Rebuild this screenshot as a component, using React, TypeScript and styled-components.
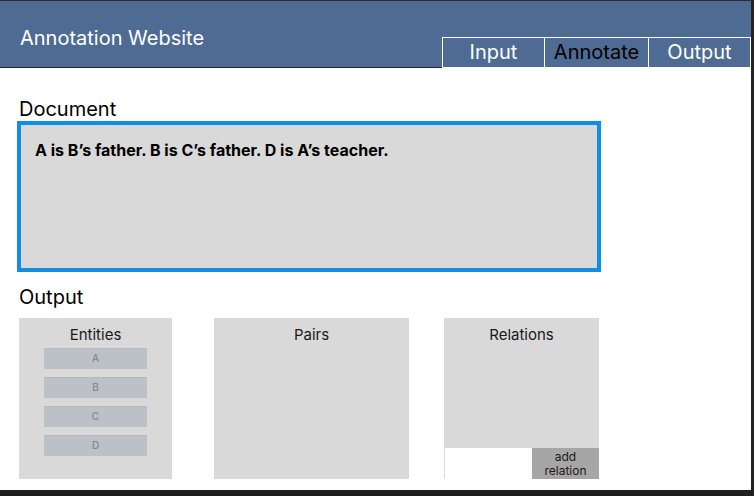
import styled, { createGlobalStyle } from "styled-components"

const tabs = [
  { label: "Input", active: false, width: 103 },
  { label: "Annotate", active: true, width: 105 },
  { label: "Output", active: false, width: 103 },
]

const entities = ["A", "B", "C", "D"]

export default function App() {
  return (
    <>
      <GlobalStyle />
      <Frame>
        <Header>
          <Title>Annotation Website</Title>
          <TabGroup>
            {tabs.map((t) => (
              <Tab key={t.label} $active={t.active} $width={t.width}>
                {t.label}
              </Tab>
            ))}
          </TabGroup>
        </Header>
        <Main>
          <SectionLabel>Document</SectionLabel>
          <DocumentBox>A is B’s father. B is C’s father. D is A’s teacher.</DocumentBox>
          <SectionLabel $top={14}>Output</SectionLabel>
          <Panels>
            <Panel $width={153}>
              <PanelTitle>Entities</PanelTitle>
              <EntityList>
                {entities.map((e) => (
                  <Entity key={e}>{e}</Entity>
                ))}
              </EntityList>
            </Panel>
            <Panel $width={195}>
              <PanelTitle>Pairs</PanelTitle>
            </Panel>
            <RelationPanel>
              <RelationBody>
                <PanelTitle>Relations</PanelTitle>
              </RelationBody>
              <RelationFooter>
                <AddButton>
                  add
                  <br />
                  relation
                </AddButton>
              </RelationFooter>
            </RelationPanel>
          </Panels>
        </Main>
      </Frame>
    </>
  )
}

const GlobalStyle = createGlobalStyle`
  body {
    margin: 0;
    background: #ffffff;
    font-family: Inter, "Noto Sans", sans-serif;
  }
  * {
    box-sizing: border-box;
  }
`

const Frame = styled.div`
  width: 754px;
  height: 496px;
  border-top: 1px solid #2b2b2b;
  border-right: 3px solid #242424;
  border-bottom: 6px solid #1f1f1f;
  display: flex;
  flex-direction: column;
  overflow: hidden;
`

const Header = styled.header`
  height: 67px;
  flex-shrink: 0;
  background: #4e6c93;
  border-bottom: 1px solid #1e2a3a;
  display: flex;
  justify-content: space-between;
  align-items: flex-end;
`

const Title = styled.h1`
  margin: 0 0 17px 20px;
  font-size: 20px;
  line-height: 24px;
  font-weight: 400;
  color: #ffffff;
`

const TabGroup = styled.nav`
  display: flex;
  margin-bottom: -1px;
`

const Tab = styled.div<{ $active?: boolean; $width: number }>`
  width: ${(p) => p.$width}px;
  height: 31px;
  margin-left: -1px;
  border: 1px solid #ffffff;
  display: flex;
  align-items: center;
  justify-content: center;
  padding-bottom: 1px;
  font-size: 20px;
  color: ${(p) => (p.$active ? "#000000" : "#ffffff")};
  &:first-child {
    margin-left: 0;
  }
`

const Main = styled.main`
  padding: 30px 0 0 19px;
  display: flex;
  flex-direction: column;
`

const SectionLabel = styled.h2<{ $top?: number }>`
  margin: ${(p) => p.$top ?? 0}px 0 0 0;
  font-size: 20px;
  line-height: 23px;
  font-weight: 400;
  color: #000000;
`

const DocumentBox = styled.div`
  width: 584px;
  height: 151px;
  margin-left: -2px;
  border: 4px solid #0f8ee2;
  background: #d9d9d9;
  padding: 16px 0 0 14px;
  font-size: 16px;
  line-height: 18px;
  font-weight: 700;
  color: #000000;
`

const Panels = styled.div`
  margin-top: 9px;
  display: flex;
  gap: 42px;
  & > :last-child {
    margin-left: -7px;
  }
`

const Panel = styled.section<{ $width: number }>`
  width: ${(p) => p.$width}px;
  height: 161px;
  background: #d9d9d9;
  padding-top: 8px;
  display: flex;
  flex-direction: column;
  align-items: center;
`

const PanelTitle = styled.div`
  font-size: 15px;
  line-height: 18px;
  color: #1a1a1a;
  text-align: center;
`

const EntityList = styled.div`
  margin-top: 4px;
  display: flex;
  flex-direction: column;
  gap: 8px;
`

const Entity = styled.div`
  width: 103px;
  height: 21px;
  background: #bcc1c8;
  border-top: 1px solid #b4b9c0;
  display: flex;
  align-items: center;
  justify-content: center;
  padding-bottom: 2px;
  font-size: 10px;
  font-weight: 500;
  color: #84878b;
`

const RelationPanel = styled.section`
  width: 155px;
  height: 161px;
  display: flex;
  flex-direction: column;
`

const RelationBody = styled.div`
  flex: 1;
  background: #d9d9d9;
  padding-top: 8px;
`

const RelationFooter = styled.div`
  height: 31px;
  display: flex;
  justify-content: flex-end;
  background: #ffffff;
  border-left: 1px solid #d9d9d9;
`

const AddButton = styled.button`
  width: 67px;
  height: 31px;
  border: none;
  padding: 0;
  background: #a6a6a6;
  font-family: inherit;
  font-size: 12px;
  line-height: 14px;
  color: #1a1a1a;
  text-align: center;
`
